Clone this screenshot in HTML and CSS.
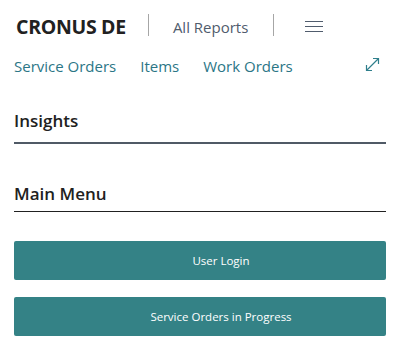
FILE: index.html
```html
<!DOCTYPE html>
<html lang="en">
<head>
  <meta charset="UTF-8" />
  <meta name="viewport" content="width=device-width, initial-scale=1.0" />
  <title>CRONUS DE</title>
  <link rel="stylesheet" href="styles.css">
</head>
<body>
  <div class="top-bar">
    <div class="company">CRONUS DE</div>
    <div class="sep"></div>
    <div class="top-link">All Reports</div>
    <div class="sep"></div>
    <div class="menu-btn">
      <svg width="18" height="11" viewBox="0 0 18 11">
        <path d="M0 0.5h18M0 5.5h18M0 10.5h18" stroke="#505c6d" stroke-width="1" fill="none" />
      </svg>
    </div>
  </div>

  <div class="nav">
    <a class="nav-link">Service Orders</a>
    <a class="nav-link">Items</a>
    <a class="nav-link">Work Orders</a>
    <div class="expand">
      <svg width="15" height="15" viewBox="0 0 15 15">
        <path d="M1.5 13.5L13.5 1.5M8 1.5h5.5V7M1.5 8v5.5H7" stroke="#2f7f8c" stroke-width="1.2" fill="none" />
      </svg>
    </div>
  </div>

  <div class="section first">
    <div class="section-title insights">Insights</div>
  </div>

  <div class="section">
    <div class="section-title main">Main Menu</div>
  </div>

  <div class="actions">
    <button class="action-btn">User Login</button>
    <button class="action-btn">Service Orders in Progress</button>
  </div>
</body>
</html>
```

FILE: styles.css
```css
* {
  box-sizing: border-box;
  margin: 0;
  padding: 0;
  font-family: 'Open Sans', sans-serif;
}

body {
  background: #fff;
  width: 402px;
  padding: 0 16px 0 14px;
}

.top-bar {
  display: flex;
  align-items: center;
  height: 22px;
  margin-top: 14px;
}

.company {
  font-size: 19.5px;
  font-weight: 700;
  color: #212121;
  padding-left: 2px;
  padding-top: 3px;
  letter-spacing: -0.3px;
}

.sep {
  width: 1px;
  height: 22px;
  background: #a6a6a6;
  margin: 0 24px 0 22px;
}

.top-link {
  font-size: 15px;
  color: #505c6d;
  padding-top: 3px;
}

.top-link + .sep {
  margin-left: 25px;
}

.menu-btn {
  display: flex;
  padding-left: 7px;
  padding-top: 2px;
}

.nav {
  display: flex;
  align-items: center;
  margin-top: 19px;
  height: 22px;
}

.nav-link {
  font-size: 15px;
  color: #2b7686;
  margin-right: 24px;
}

.expand {
  margin-left: auto;
  display: flex;
  margin-right: 6px;
  margin-top: -3px;
}

.section {
  margin-top: 38px;
}

.section.first {
  margin-top: 32px;
}

.section-title {
  font-size: 17px;
  font-weight: 600;
  color: #212121;
  line-height: 24px;
}

.insights {
  border-bottom: 2px solid #505a66;
  padding-bottom: 9px;
}

.main {
  border-bottom: 1px solid #212121;
  padding-bottom: 5px;
}

.actions {
  display: flex;
  flex-direction: column;
  gap: 17px;
  margin-top: 29px;
}

.action-btn {
  height: 39px;
  border: none;
  border-radius: 2px;
  background: #348286;
  color: #fff;
  font-size: 11.5px;
  padding-left: 42px;
  text-align: center;
}
```
